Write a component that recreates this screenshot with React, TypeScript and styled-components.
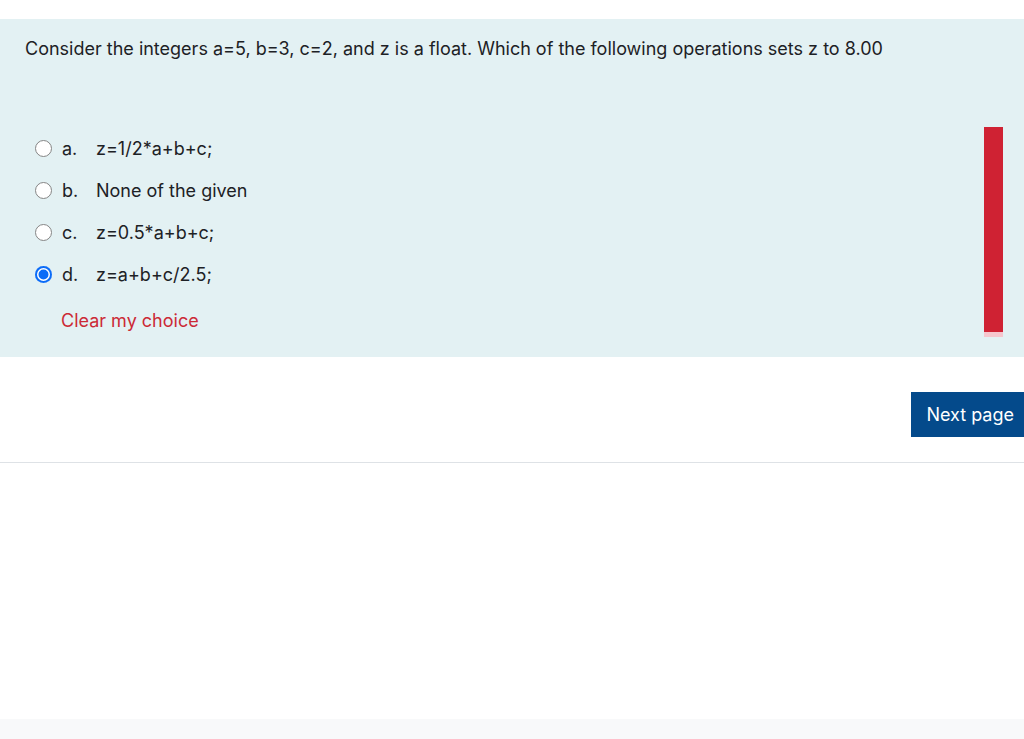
import React from "react";
import styled, { createGlobalStyle } from "styled-components";

const GlobalStyle = createGlobalStyle`
  html, body {
    margin: 0;
    padding: 0;
    background: #ffffff;
  }
  body {
    font-family: "Inter", "Liberation Sans", Arial, sans-serif;
    color: #1d2125;
  }
`;

const options = [
  { letter: "a.", text: "z=1/2*a+b+c;" },
  { letter: "b.", text: "None of the given" },
  { letter: "c.", text: "z=0.5*a+b+c;" },
  { letter: "d.", text: "z=a+b+c/2.5;" },
];

const App = () => {
  const [selected, setSelected] = React.useState(3);

  return (
    <>
      <GlobalStyle />
      <Page>
        <Formulation>
          <Content>
            <QText>
              Consider the integers a=5, b=3, c=2, and z is a float. Which of the following operations sets z to 8.00
            </QText>
            <Answers>
              {options.map((o, i) => (
                <Row key={o.letter} onClick={() => setSelected(i)}>
                  <Radio checked={selected === i} />
                  <Letter>{o.letter}</Letter>
                  <AnswerText>{o.text}</AnswerText>
                </Row>
              ))}
            </Answers>
            <ClearLink onClick={() => setSelected(-1)}>Clear my choice</ClearLink>
          </Content>
          <Bar />
        </Formulation>
        <Actions>
          <NextButton>Next page</NextButton>
        </Actions>
        <Divider />
        <Spacer />
        <Footer />
      </Page>
    </>
  );
};

const Page = styled.div`
  padding-top: 19px;
  display: flex;
  flex-direction: column;
  min-height: 739px;
  box-sizing: border-box;
`;

const Formulation = styled.div`
  background-color: #e3f1f3;
  height: 338px;
  display: flex;
`;

const Content = styled.div`
  flex: 1;
  padding: 17px 0 0 25px;
`;

const QText = styled.div`
  font-size: 18px;
  line-height: 26px;
`;

const Answers = styled.div`
  margin-top: 65px;
  display: flex;
  flex-direction: column;
`;

const Row = styled.div`
  height: 42px;
  display: flex;
  align-items: center;
  padding-left: 10px;
  font-size: 18px;
  cursor: pointer;
`;

const Radio = styled.span<{ checked: boolean }>`
  width: 17px;
  height: 17px;
  box-sizing: border-box;
  border-radius: 50%;
  flex-shrink: 0;
  background: ${(p) => (p.checked ? "#0b6cf7" : "#ffffff")};
  border: ${(p) => (p.checked ? "none" : "1px solid #858585")};
  box-shadow: ${(p) => (p.checked ? "inset 0 0 0 2px #0b6cf7, inset 0 0 0 3.5px #ffffff" : "none")};
`;

const Letter = styled.span`
  margin-left: 10px;
  width: 34px;
`;

const AnswerText = styled.span``;

const ClearLink = styled.a`
  display: block;
  margin: 13px 0 0 36px;
  font-size: 18px;
  line-height: 26px;
  color: #cc2a36;
  cursor: pointer;
`;

const Bar = styled.div`
  width: 19px;
  height: 205px;
  margin: 108px 21px 0 0;
  background-color: #cf2233;
  border-bottom: 5px solid #f6c6cd;
`;

const Actions = styled.div`
  display: flex;
  justify-content: flex-end;
  margin-top: 35px;
`;

const NextButton = styled.button`
  height: 45px;
  padding: 0 10px 0 15px;
  border: none;
  border-radius: 0;
  background-color: #044a8b;
  color: #ffffff;
  font-family: inherit;
  font-size: 18px;
  cursor: pointer;
`;

const Divider = styled.hr`
  margin: 25px 0 0;
  border: none;
  border-top: 1px solid #dee2e6;
`;

const Spacer = styled.div`
  flex: 1;
`;

const Footer = styled.div`
  height: 20px;
  background-color: #f8f9fa;
`;

export default App;
